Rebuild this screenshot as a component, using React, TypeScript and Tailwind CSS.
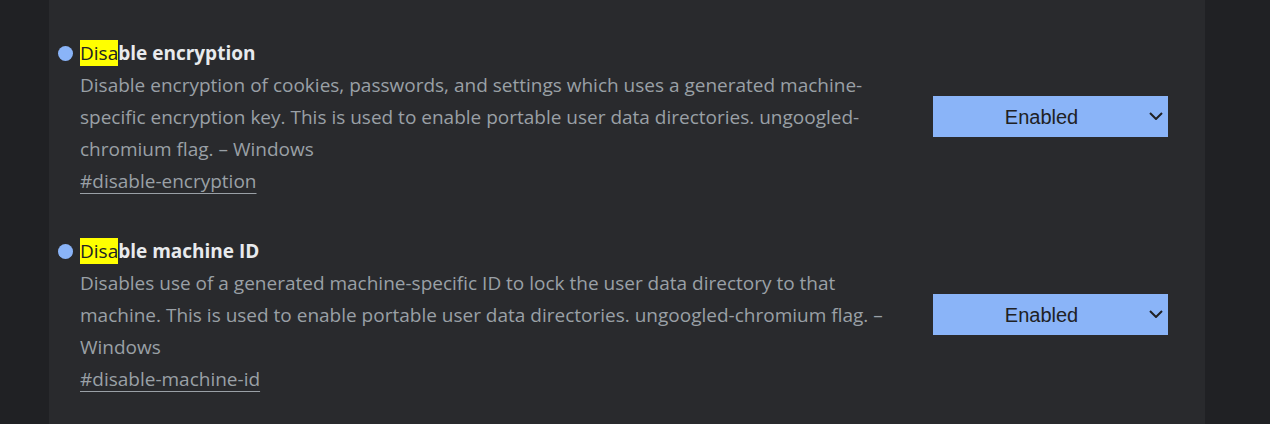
import React from 'react';

type Flag = {
    rest: string;
    description: string;
    link: string;
};

const flags: Flag[] = [
    {
        rest: 'ble encryption',
        description:
            'Disable encryption of cookies, passwords, and settings which uses a generated machine-specific encryption key. This is used to enable portable user data directories. ungoogled-chromium flag. – Windows',
        link: '#disable-encryption',
    },
    {
        rest: 'ble machine ID',
        description:
            'Disables use of a generated machine-specific ID to lock the user data directory to that machine. This is used to enable portable user data directories. ungoogled-chromium flag. – Windows',
        link: '#disable-machine-id',
    },
];

function Chevron() {
    return (
        <svg width="14" height="8" viewBox="0 0 14 8" fill="none">
            <path d="M1 1l6 6 6-6" stroke="#202124" strokeWidth="2" />
        </svg>
    );
}

function FlagRow({ flag }: { flag: Flag }) {
    return (
        <div className="flex items-center">
            <div className="w-[851px] flex">
                <div className="w-[31px] pl-[9px] pt-[6px] shrink-0">
                    <div className="w-[15px] h-[15px] rounded-full bg-[#8ab4f8]" />
                </div>
                <div className="flex-1">
                    <h2 className="text-[19px] leading-[27px] font-bold text-[#e8eaed]">
                        <span className="bg-[#ffff00] text-[#202124] font-normal">Disa</span>
                        {flag.rest}
                    </h2>
                    <p className="mt-[2px] text-[19px] leading-[32px] text-[#9aa0a6]">
                        {flag.description}
                    </p>
                    <a href={flag.link} className="text-[19px] leading-[32px] text-[#9aa0a6] underline underline-offset-[5px]">
                        {flag.link}
                    </a>
                </div>
            </div>
            <div className="ml-[33px] mb-[4px] w-[235px] h-[41px] bg-[#8ab4f8] flex items-center relative pr-[18px]">
                <span className="flex-1 text-center text-[20px] text-[#202124] font-['Liberation_Sans',Arial,sans-serif]">
                    Enabled
                </span>
                <span className="absolute right-[5px] top-[16px]">
                    <Chevron />
                </span>
            </div>
        </div>
    );
}

export default function App() {
    return (
        <div className="h-[424px] bg-[#202124] overflow-hidden font-['Open_Sans',sans-serif]">
            <div className="ml-[49px] w-[1156px] h-full bg-[#292a2d] pt-[40px] flex flex-col gap-[41px]">
                {flags.map((flag) => (
                    <FlagRow key={flag.link} flag={flag} />
                ))}
            </div>
        </div>
    );
}
